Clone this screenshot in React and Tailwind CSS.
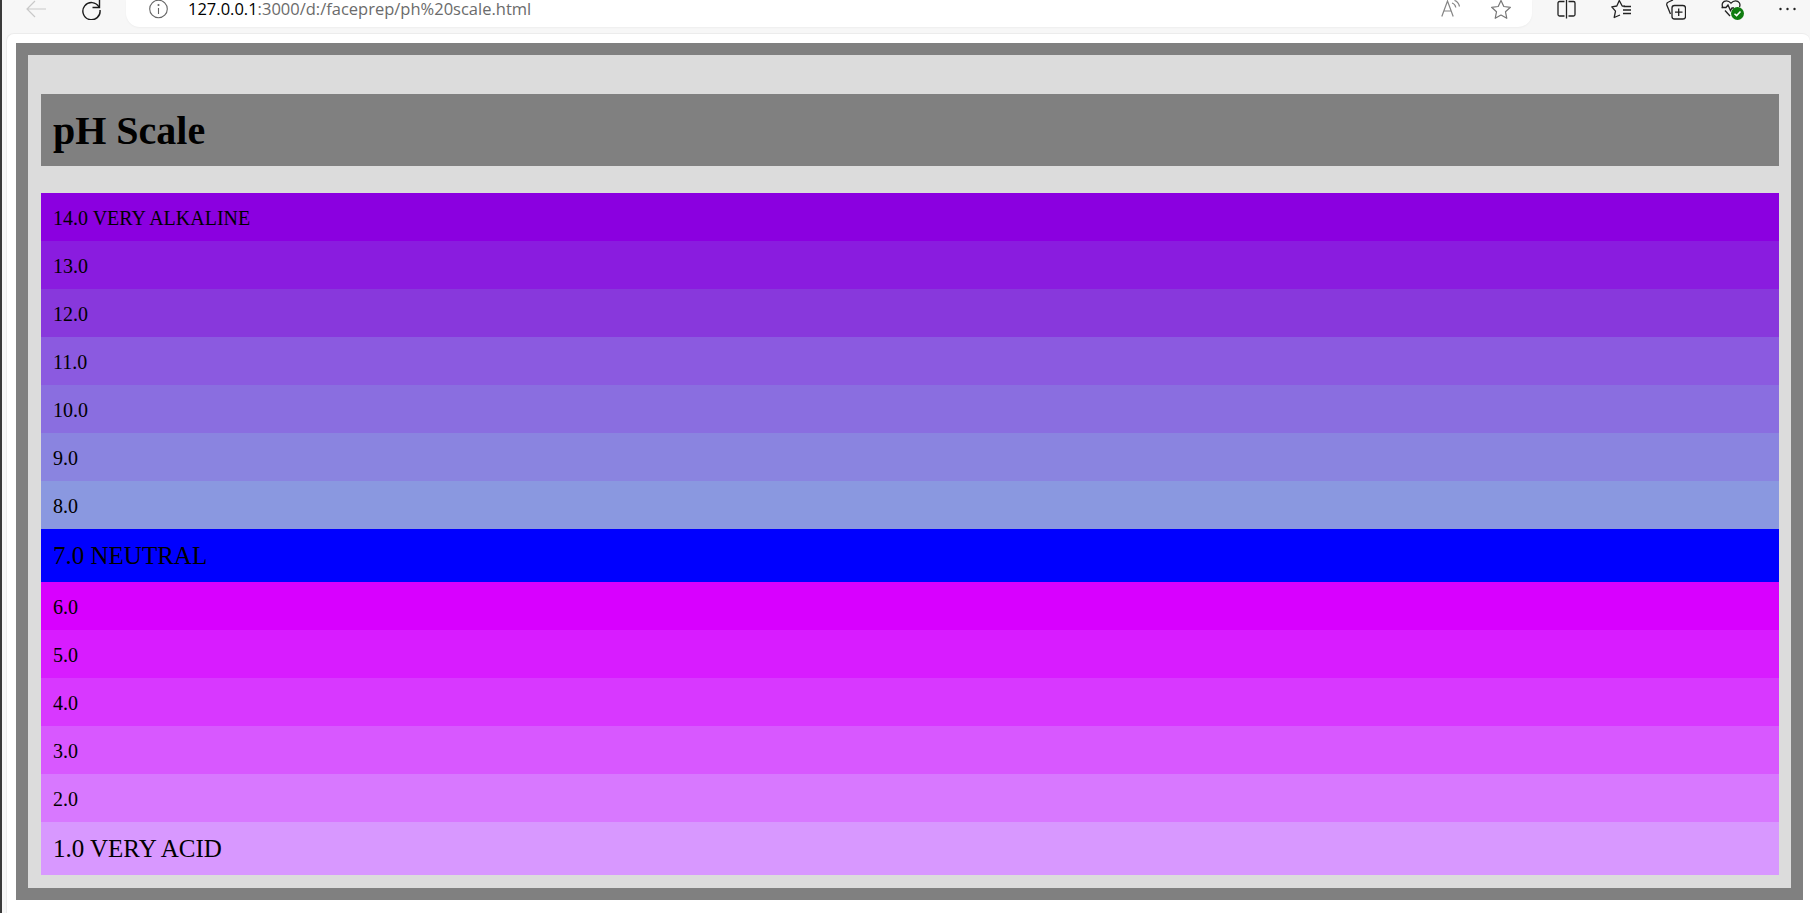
const alkaline = [
  { label: '14.0 VERY ALKALINE', color: 'bg-[#8b00e0]' },
  { label: '13.0', color: 'bg-[#8a1cdf]' },
  { label: '12.0', color: 'bg-[#8838dc]' },
  { label: '11.0', color: 'bg-[#8b5ae0]' },
  { label: '10.0', color: 'bg-[#8a6ee0]' },
  { label: '9.0', color: 'bg-[#8a84e0]' },
  { label: '8.0', color: 'bg-[#8a98e0]' },
];

const acid = [
  { label: '6.0', color: 'bg-[#d800ff]' },
  { label: '5.0', color: 'bg-[#d81cff]' },
  { label: '4.0', color: 'bg-[#d838ff]' },
  { label: '3.0', color: 'bg-[#d858ff]' },
  { label: '2.0', color: 'bg-[#d878ff]' },
];

const Row = ({ label, color }) => (
  <div className={`h-[48px] px-3 pt-[1px] flex items-center text-[20px] ${color}`}>{label}</div>
);

const BigRow = ({ label, color }) => (
  <div className={`h-[53px] px-3 flex items-center text-[25px] ${color}`}>{label}</div>
);

const BackArrow = () => (
  <svg width="20" height="18" viewBox="0 0 20 18" fill="none" stroke="#c9c9c9" strokeWidth="1.2" className="shrink-0">
    <path d="M20 9 H1 M9 1 L1 9 L9 17" />
  </svg>
);

const Refresh = () => (
  <svg width="20" height="20" viewBox="0 0 20 20" fill="none" stroke="#1a1a1a" strokeWidth="1.4" className="shrink-0">
    <path d="M18 7 A8.600 8.600 0 1 0 19 10" />
    <path d="M18.500 0 V7.500 H11.500" />
  </svg>
);

const InfoIcon = () => (
  <svg width="19" height="19" viewBox="0 0 19 19" fill="none" stroke="#666" strokeWidth="1.1" className="shrink-0">
    <circle cx="9.500" cy="9" r="8.800" />
    <path d="M9.500 8 V14" />
    <circle cx="9.500" cy="5" r="0.500" fill="#666" />
  </svg>
);

const ReadAloud = () => (
  <svg width="20" height="17" viewBox="0 0 20 17" fill="none" stroke="#858585" strokeWidth="1.2" className="shrink-0">
    <path d="M0.800 16.500 L6.500 1 L12.200 16.500 M2.800 11 H10.200" />
    <path d="M11 3 C13 3.500 14.300 5 14.800 7.500 M13.500 0.500 C16 1.200 17.800 3.500 18.500 6.500" />
  </svg>
);

const StarIcon = () => (
  <svg width="20" height="19" viewBox="0 0 20 19" fill="none" stroke="#777" strokeWidth="1.2" strokeLinejoin="round" className="shrink-0">
    <path d="M10 0.500 L12.800 6.500 L19.400 7.300 L14.500 11.800 L15.800 18.300 L10 15 L4.200 18.300 L5.500 11.800 L0.600 7.300 L7.200 6.500 Z" />
  </svg>
);

const SplitIcon = () => (
  <svg width="19" height="19" viewBox="0 0 19 19" fill="none" stroke="#222" strokeWidth="1.300" className="shrink-0">
    <path d="M7.500 1.500 H2.500 A1.500 1.500 0 0 0 1 3 V14.500 A1.500 1.500 0 0 0 2.500 16 H7.500" />
    <path d="M11.500 1.500 H16.500 A1.500 1.500 0 0 1 18 3 V14.500 A1.500 1.500 0 0 1 16.500 16 H11.500" />
    <path d="M9.500 0 V18.500" />
  </svg>
);

const FavoritesIcon = () => (
  <svg width="20" height="19" viewBox="0 0 20 19" fill="none" stroke="#222" strokeWidth="1.300" strokeLinejoin="round" className="shrink-0">
    <path d="M14 6.200 L11.200 6 L8.300 0.500 L5.800 6 L0.800 6.800 L4.500 11.200 L3.200 17.500 L9 15" />
    <path d="M12.500 6.500 H20 M12 10 H20 M12 13.500 H20" />
  </svg>
);

const CollectionsIcon = () => (
  <svg width="20" height="20" viewBox="0 0 20 20" fill="none" stroke="#222" strokeWidth="1.300" className="shrink-0">
    <path d="M4.500 14 L0.800 5 C0.500 3.500 1 2.500 2.500 2 L7 0" />
    <rect x="6" y="5.500" width="13.500" height="13.500" rx="2.500" />
    <path d="M12.700 8.500 V16 M9 12.200 H16.500" />
  </svg>
);

const HealthIcon = () => (
  <div className="relative w-[23px] h-[20px] shrink-0">
    <svg width="20" height="18" viewBox="0 0 20 18" fill="none" stroke="#222" strokeWidth="1.300">
      <path d="M2 8 C0 4 2 0.800 5.500 0.800 C7.500 0.800 9 2 10 3.200 C11 2 12.500 0.800 14.500 0.800 C18 0.800 19.800 4 18.500 7" />
      <path d="M0.500 7.500 H5 L7 5 L9.500 10.500 L11 8 H13" />
      <path d="M4 10.500 L9 16" />
    </svg>
    <div className="absolute right-0 bottom-0 w-[13px] h-[13px] rounded-full bg-[#107c10] flex items-center justify-center">
      <svg width="9" height="9" viewBox="0 0 9 9" fill="none" stroke="white" strokeWidth="1.500">
        <path d="M1.500 4.700 L3.600 6.600 L7.500 2.500" />
      </svg>
    </div>
  </div>
);

const MoreDots = () => (
  <svg width="17" height="18" viewBox="0 0 17 18" fill="#222" className="shrink-0">
    <circle cx="1.500" cy="9" r="1.200" />
    <circle cx="8.500" cy="9" r="1.200" />
    <circle cx="15.500" cy="9" r="1.200" />
  </svg>
);

const BrowserBar = () => (
  <div className="h-[33px] bg-[#f7f7f7] flex items-start overflow-hidden">
    <div className="pl-[24px] flex items-start gap-[35px] shrink-0">
      <BackArrow />
      <Refresh />
    </div>
    <div className="ml-[25px] w-[1406px] h-[27px] bg-white rounded-b-[14px] flex items-start shrink-0 shadow-[0_1px_2px_rgba(0,0,0,0.04)]">
      <div className="ml-[23px]">
        <InfoIcon />
      </div>
      <div className="ml-[20px] text-[16.5px] leading-[17px] text-[#6b6b6b] font-['Open_Sans',sans-serif]">
        <span className="text-black">127.0.0.1</span>:3000/d:/faceprep/ph%20scale.html
      </div>
      <div className="ml-auto flex items-start gap-[30px] pr-[21px]">
        <ReadAloud />
        <StarIcon />
      </div>
    </div>
    <div className="ml-[25px] flex items-start gap-[35px]">
      <SplitIcon />
      <FavoritesIcon />
      <CollectionsIcon />
      <HealthIcon />
      <MoreDots />
    </div>
  </div>
);

const App = () => {
  return (
    <div className="w-[1810px] h-[913px] overflow-hidden flex bg-[#f7f7f7] font-['Liberation_Serif',serif] text-black">
      <div className="w-[2px] bg-[#3a3a3a] shrink-0"></div>
      <div className="flex-1 flex flex-col min-w-0">
        <BrowserBar />
        <div className="flex-1 ml-[4px] bg-white rounded-t-[8px] border-l border-t border-[#ececec] pt-[9px] pl-[9px] pr-[7px]">
          {/* outer frame */}
          <div className="border-[12px] border-[#808080] bg-[#dcdcdc] pt-[39px] pl-[13px] pr-[12px] pb-[13px]">
            <h1 className="h-[72px] px-3 pt-[2px] flex items-center bg-[#808080] text-[40px] font-bold">pH Scale</h1>
            <div className="mt-[27px]">
              {alkaline.map((row) => (
                <Row key={row.label} {...row} />
              ))}
              <BigRow label="7.0 NEUTRAL" color="bg-[#0000ff]" />
              {acid.map((row) => (
                <Row key={row.label} {...row} />
              ))}
              <BigRow label="1.0 VERY ACID" color="bg-[#d898ff]" />
            </div>
          </div>
        </div>
      </div>
    </div>
  );
};

export default App;
